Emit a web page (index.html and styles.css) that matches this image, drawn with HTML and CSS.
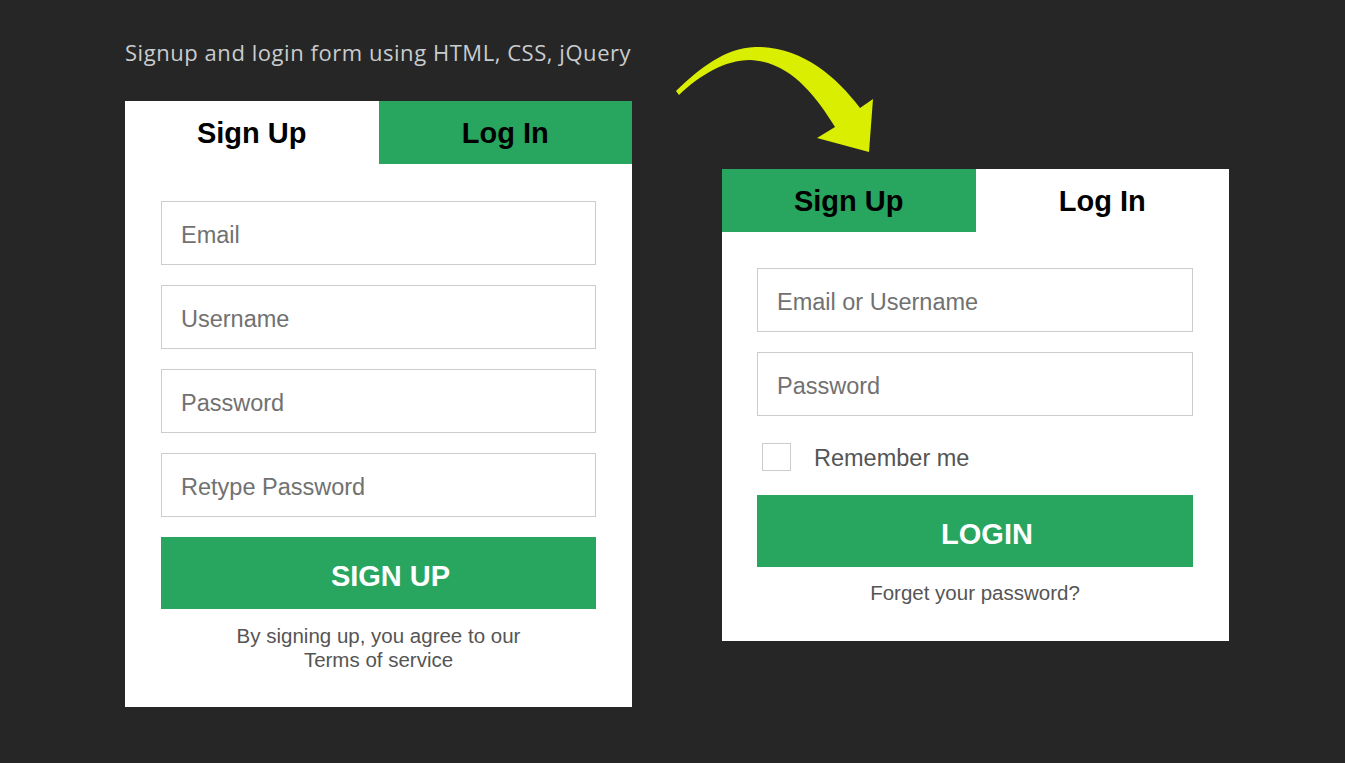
FILE: index.html
```html
<!DOCTYPE html>
<html lang="en">
<head>
<meta charset="utf-8">
<title>Signup and login form</title>
<link rel="stylesheet" href="styles.css">
</head>
<body>
<div class="page">
  <h1 class="title">Signup and login form using HTML, CSS, jQuery</h1>
  <div class="cards">
    <div class="card card-signup">
      <div class="tabs">
        <div class="tab tab-active">Sign Up</div>
        <div class="tab tab-green">Log In</div>
      </div>
      <div class="body">
        <div class="field">Email</div>
        <div class="field">Username</div>
        <div class="field">Password</div>
        <div class="field">Retype Password</div>
        <div class="btn">SIGN UP</div>
        <p class="note">By signing up, you agree to our<br>Terms of service</p>
      </div>
    </div>
    <div class="card card-login">
      <div class="tabs">
        <div class="tab tab-green">Sign Up</div>
        <div class="tab tab-active">Log In</div>
      </div>
      <div class="body">
        <div class="field">Email or Username</div>
        <div class="field">Password</div>
        <div class="remember">
          <span class="check"></span>
          <span class="remember-label">Remember me</span>
        </div>
        <div class="btn">LOGIN</div>
        <p class="note note-login">Forget your password?</p>
      </div>
    </div>
  </div>
  <svg class="arrow" viewBox="660 40 240 130" width="240" height="130" aria-hidden="true">
    <path d="M676,91 C700,68 725,48 755,47 C800,46 835,75 860,108 L873,99 L869,152 L817,138 L835,127 C815,95 790,62 750,60 C725,60 700,75 679,95 Z" fill="#d9ee00"/>
  </svg>
</div>
</body>
</html>
```
FILE: styles.css
```css
html, body {
  margin: 0;
  padding: 0;
  background: #262626;
}
body {
  width: 1345px;
  height: 763px;
  overflow: hidden;
  font-family: "Liberation Sans", Arial, sans-serif;
}
.page {
  position: relative;
  padding: 38px 0 0 125px;
}
.title {
  margin: 0 0 35px 0;
  font-family: "Open Sans", sans-serif;
  font-weight: 400;
  font-size: 22px;
  letter-spacing: 0.55px;
  line-height: 28px;
  color: #c9ccce;
}
.cards {
  display: flex;
  align-items: flex-start;
  gap: 90px;
}
.card {
  width: 507px;
  background: #ffffff;
}
.card-login {
  margin-top: 68px;
}
.tabs {
  display: flex;
  height: 63px;
}
.tab {
  flex: 1;
  display: flex;
  align-items: center;
  justify-content: center;
  padding-top: 2px;
  font-weight: 700;
  font-size: 29px;
  color: #000;
  background: #fff;
}
.tab-green {
  background: #28a55f;
}
.body {
  padding: 37px 36px 35px 36px;
}
.card-login .body {
  padding: 36px 36px 36px 35px;
}
.field {
  box-sizing: border-box;
  height: 64px;
  border: 1px solid #cccccc;
  margin-bottom: 20px;
  padding: 4px 0 0 19px;
  display: flex;
  align-items: center;
  font-size: 23.5px;
  color: #717171;
}
.btn {
  box-sizing: border-box;
  height: 72px;
  background: #28a55f;
  color: #fff;
  font-weight: 700;
  font-size: 29px;
  display: flex;
  align-items: center;
  justify-content: center;
  padding: 6px 0 0 24px;
}
.card-login .btn {
  margin-top: 24px;
}
.note {
  margin: 15px 0 0 0;
  text-align: center;
  font-size: 20.5px;
  line-height: 24px;
  color: #555555;
}
.note-login {
  margin-top: 14px;
}
.remember {
  display: flex;
  align-items: center;
  gap: 23px;
  height: 28px;
  margin-top: 27px;
  padding-left: 5px;
}
.check {
  width: 27px;
  height: 26px;
  border: 1px solid #cccccc;
  background: #fff;
}
.remember-label {
  padding-top: 2px;
  font-size: 23.5px;
  color: #555555;
}
.arrow {
  position: absolute;
  left: 660px;
  top: 40px;
}
```
